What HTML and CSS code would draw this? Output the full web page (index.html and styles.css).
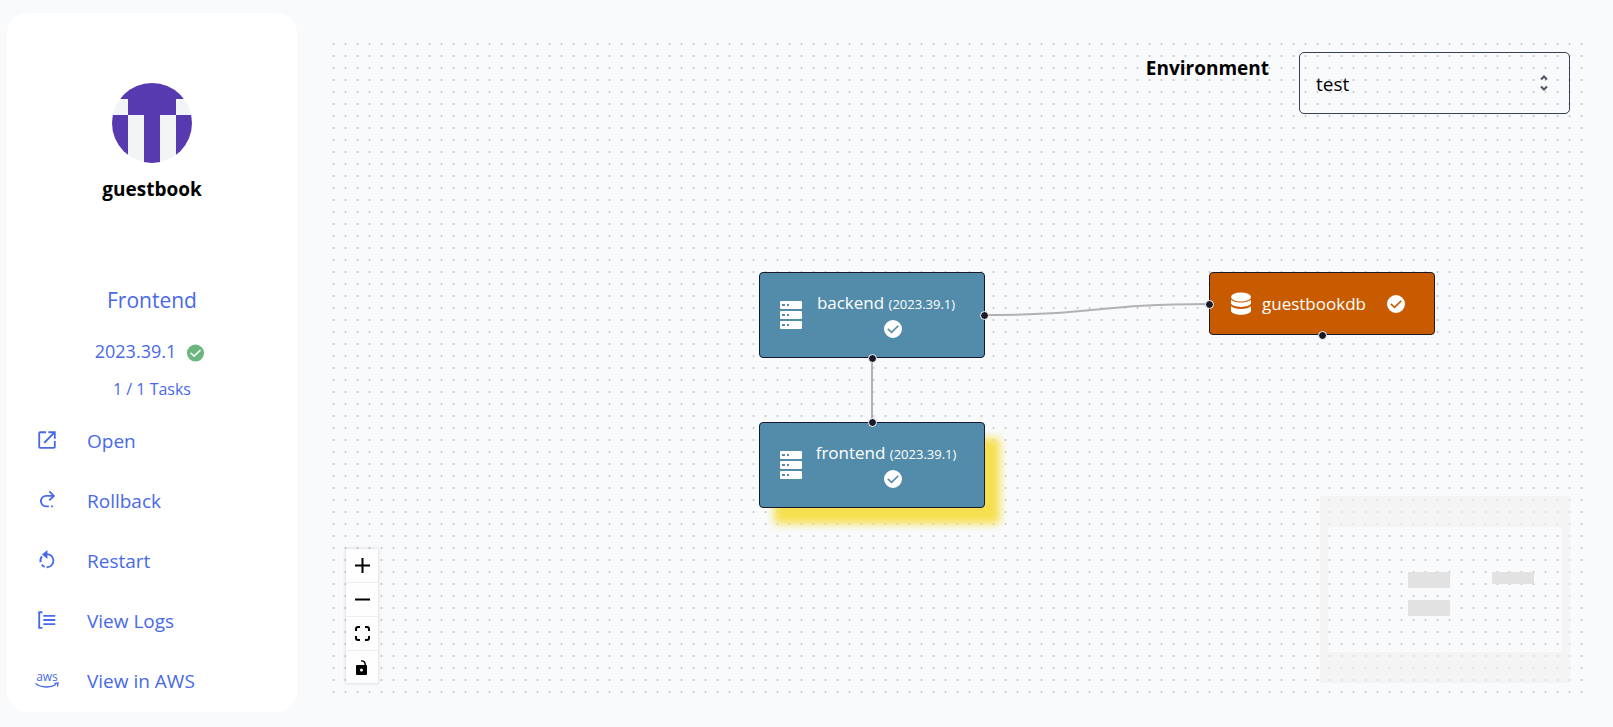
FILE: index.html
```html
<!DOCTYPE html>
<html lang="en">
<head>
<meta charset="utf-8">
<title>guestbook</title>
<link rel="stylesheet" href="styles.css">
</head>
<body>
<svg class="defs" aria-hidden="true">
  <defs>
    <symbol id="check" viewBox="0 0 20 20">
      <path fill-rule="evenodd" d="M10 1a9 9 0 1 0 0 18 9 9 0 0 0 0-18zM15.9 7.3 8.6 14.4 4.3 10.5l1-1.2 3.2 2.9 6.2-6z"/>
    </symbol>
    <symbol id="server" viewBox="0 0 24 28">
      <path fill-rule="evenodd" d="M2 0h20q1 0 1 1v6q0 1-1 1H2Q1 8 1 7V1q0-1 1-1zM3 3v2h3V3zm5 0v2h2V3zM2 10h20q1 0 1 1v6q0 1-1 1H2q-1 0-1-1v-6q0-1 1-1zm1 3v2h3v-2zm5 0v2h2v-2zM2 20h20q1 0 1 1v6q0 1-1 1H2q-1 0-1-1v-6q0-1 1-1zm1 3v2h3v-2zm5 0v2h2v-2z"/>
    </symbol>
    <symbol id="database" viewBox="0 0 22 24">
      <ellipse cx="11" cy="5" rx="10" ry="4.500"/>
      <path d="M1 7.600c3 4 17 4 20 0v4c-2 4.400-18 4.400-20 0zM1 14c3 4 17 4 20 0v5c-2 5-18 5-20 0z"/>
    </symbol>
  </defs>
</svg>
<div class="page">
  <aside class="sidebar">
    <header class="app">
      <svg class="avatar" viewBox="0 0 80 80" aria-hidden="true">
        <clipPath id="round"><circle cx="40" cy="40" r="40"/></clipPath>
        <g clip-path="url(#round)">
          <path fill="#f3f4f6" d="M0 0h80v80H0z"/>
          <path fill="#5739b0" d="M0 0h80v16H0zM16 16h48v16H16zM0 32h16v48H0zM32 32h16v48H32zM64 32h16v48H64z"/>
        </g>
      </svg>
      <h1 class="app-name">guestbook</h1>
    </header>
    <section class="service">
      <h2 class="service-name">Frontend</h2>
      <p class="version">2023.39.1 <svg class="version-icon"><use href="#check"/></svg></p>
      <p class="tasks">1 / 1 Tasks</p>
    </section>
    <nav class="actions">
      <a class="action" href="#open">
        <svg class="action-icon stroke" viewBox="0 0 24 24"><path d="M11 3.500H4.500a1 1 0 0 0-1 1v15a1 1 0 0 0 1 1h15a1 1 0 0 0 1-1V13M13.500 3.500h7v7M20.500 3.500 9 15"/></svg>
        Open</a>
      <a class="action" href="#rollback">
        <svg class="action-icon stroke" viewBox="0 0 24 24"><path d="M14.500 2.500 19.500 7.500l-5 5M19.500 7.500H11a5.700 5.700 0 0 0 0 11.400h3M16.500 19h2"/></svg>
        Rollback</a>
      <a class="action" href="#restart">
        <svg class="action-icon stroke" viewBox="0 0 24 24"><path d="M12 5.500a7.200 7.200 0 0 1 1 14.300l-1.500.1M9.500 19.500A7.500 7.500 0 0 1 6.300 17M5 14.500a7.500 7.500 0 0 1 1.500-6.500"/><path class="solid" d="M12.500 1v10L6.500 6z"/></svg>
        Restart</a>
      <a class="action" href="#logs">
        <svg class="action-icon stroke" viewBox="0 0 24 24"><path d="M7 3.500H3.500v17H7M8 7.500h13M8 12h13M8 16.500h13"/></svg>
        View Logs</a>
      <a class="action" href="#aws">
        <svg class="action-icon" viewBox="0 0 24 24"><text class="aws-word" x="12" y="13" text-anchor="middle">aws</text><path class="aws-smile" d="M.5 15.500c6 4.500 15 4.500 20.500 1M19.500 15.500l3.500-.5-.5 3.500"/></svg>
        View in AWS</a>
    </nav>
  </aside>

  <main class="canvas">
    <svg class="dots" aria-hidden="true">
      <defs><pattern id="grid" x="-3" y="5" width="12" height="12" patternUnits="userSpaceOnUse"><circle cx="5.500" cy="6" r="1"/></pattern></defs>
      <rect width="100%" height="100%" fill="url(#grid)"/>
    </svg>

    <div class="environment">
      <label class="env-label" for="env">Environment</label>
      <div class="env-field">
        <select class="env-select" id="env"><option>test</option></select>
        <svg class="env-arrows" viewBox="0 0 10 18" aria-hidden="true"><path d="M2 5.500 5 2.500l3 3M2 12.500l3 3 3-3"/></svg>
      </div>
    </div>

    <svg class="edges" aria-hidden="true">
      <path d="M654 282C766 282 766 271 878 271M541 326V389"/>
    </svg>

    <article class="node service-node backend">
      <svg class="server-icon"><use href="#server"/></svg>
      <div class="node-text"><span class="node-title">backend <small class="node-version">(2023.39.1)</small></span>
        <svg class="node-check"><use href="#check"/></svg></div>
      <i class="handle right"></i><i class="handle bottom"></i>
    </article>
    <article class="node service-node frontend">
      <svg class="server-icon"><use href="#server"/></svg>
      <div class="node-text"><span class="node-title">frontend <small class="node-version">(2023.39.1)</small></span>
        <svg class="node-check"><use href="#check"/></svg></div>
      <i class="handle top"></i>
    </article>
    <article class="node database-node">
      <svg class="database-icon"><use href="#database"/></svg>
      <span class="database-name">guestbookdb</span>
      <svg class="node-check"><use href="#check"/></svg>
      <i class="handle left"></i><i class="handle bottom"></i>
    </article>

    <div class="controls">
      <button class="control" aria-label="Zoom in"><svg class="control-icon" viewBox="0 0 15 15"><path d="M6.500 0h2v6.500H15v2H8.500V15h-2V8.500H0v-2h6.500z"/></svg></button>
      <button class="control" aria-label="Zoom out"><svg class="control-icon" viewBox="0 0 15 15"><path d="M0 6.500h15v2H0z"/></svg></button>
      <button class="control" aria-label="Fit view"><svg class="control-icon fit" viewBox="0 0 15 15"><path d="M1 5V3q0-2 2-2h2M10 1h2q2 0 2 2v2M14 10v2q0 2-2 2h-2M5 14H3q-2 0-2-2v-2"/></svg></button>
      <button class="control" aria-label="Toggle interactivity"><svg class="control-icon" viewBox="0 0 15 15"><path fill-rule="evenodd" d="M2 5h7.500C9.500 2.500 8.500 1.500 6 1.500V.2C9.500 0 11 2 11 5q1 0 1 1v8q0 1-1 1H2q-1 0-1-1V6q0-1 1-1zm4.500 3.500a1.500 1.500 0 1 0 0 3 1.500 1.500 0 0 0 0-3z"/></svg></button>
    </div>

    <svg class="minimap" viewBox="0 0 250 187" role="img" aria-label="Mini map">
      <path class="minimap-mask" fill-rule="evenodd" d="M0 0h250v187H0zM8 31v125h234V31z"/>
      <g class="minimap-nodes"><rect x="88" y="76" width="42" height="16" rx="1"/><rect x="88" y="104" width="42" height="16" rx="1"/><rect x="172" y="76" width="42" height="12" rx="1"/></g>
    </svg>
  </main>
</div>
</body>
</html>
```
FILE: styles.css
```css
* { box-sizing: border-box; }
body {
  margin: 0;
  background: #f9fafc;
  color: #000;
  font-family: "Segoe UI", "Open Sans", "Noto Sans", sans-serif;
  font-size: 19px;
  line-height: 28px;
}
h1, h2, p { margin: 0; }
svg { display: block; fill: currentColor; }
.defs { position: absolute; width: 0; height: 0; }

.page {
  display: flex;
  gap: 34px;
  min-height: 100vh;
  padding: 13px 28px 15px 7px;
}

.sidebar {
  flex: 0 0 290px;
  padding: 70px 28px 0;
  border-radius: 20px;
  background: #fff;
  color: #4969e8;
}
.app {
  display: flex;
  flex-direction: column;
  align-items: center;
  gap: 12px;
  color: #000;
}
.avatar { width: 80px; height: 80px; }
.app-name { font-size: 19px; font-weight: 700; }
.service {
  display: flex;
  flex-direction: column;
  align-items: center;
  padding-top: 83px;
}
.service-name { font-size: 21px; font-weight: 400; }
.version {
  display: flex;
  align-items: center;
  gap: 10px;
  padding: 23px 4px 0 0;
  font-size: 18px;
}
.version-icon { width: 19px; height: 20px; margin-top: 3px; color: #6bb57f; }
.tasks { padding-top: 10px; font-size: 16px; }
.actions { padding-top: 8px; }
.action {
  display: flex;
  align-items: center;
  gap: 28px;
  height: 60px;
  color: inherit;
  text-decoration: none;
}
.action-icon { width: 24px; height: 24px; margin-bottom: 2px; }
.stroke { padding: 1px; fill: none; stroke: currentColor; stroke-width: 2; }
.solid { fill: currentColor; stroke: none; }
.aws-word { font-size: 12px; }
.aws-smile { fill: none; stroke: currentColor; stroke-width: 1.4; }

.canvas {
  position: relative;
  flex: 1;
  min-width: 0;
  margin: 20px 0 14px;
  overflow: hidden;
}
.dots, .edges { position: absolute; inset: 0; width: 100%; height: 100%; }
.dots { fill: #c4c4c7; }
.edges { fill: none; stroke: #b1b1b7; stroke-width: 2; }

.environment {
  position: relative;
  display: flex;
  justify-content: flex-end;
  gap: 30px;
  padding: 19px 15px 0 0;
}
.env-label { padding-top: 2px; font-weight: 700; }
.env-field { position: relative; width: 271px; }
.env-select {
  width: 100%;
  height: 62px;
  padding: 2px 40px 0 16px;
  border: 1px solid #374151;
  border-radius: 5px;
  background: transparent;
  color: #000;
  font: inherit;
  appearance: none;
}
.env-arrows {
  position: absolute;
  top: 22px;
  right: 21px;
  width: 10px;
  height: 18px;
  fill: none;
  stroke: #4b5563;
  stroke-width: 2;
  pointer-events: none;
}

.node {
  position: absolute;
  display: flex;
  align-items: center;
  width: 226px;
  border: 1px solid #1a192b;
  border-radius: 4px;
  color: #fff;
  font-size: 17px;
  line-height: 26px;
}
.service-node {
  left: 428px;
  height: 86px;
  padding-left: 19px;
  gap: 13px;
  background: #528caa;
}
.backend { top: 239px; }
.frontend { top: 389px; box-shadow: 15px 16px 8px #f6e050; }
.database-node {
  top: 239px;
  left: 878px;
  height: 63px;
  padding-left: 20px;
  background: #c85b00;
}
.server-icon { width: 24px; height: 28px; }
.node-text { display: flex; flex-direction: column; align-items: center; width: 154px; gap: 2px; padding-bottom: 2px; }
.node-title { padding-right: 14px; white-space: nowrap; }
.node-version { font-size: 13px; }
.node-check { width: 20px; height: 20px; }
.database-icon { width: 22px; height: 24px; margin-right: 10px; }
.database-name { flex: 0 0 124px; }
.handle {
  position: absolute;
  width: 9px;
  height: 9px;
  border: 1px solid #fff;
  border-radius: 50%;
  background: #1a192b;
}
.top { top: -5px; left: calc(50% - 4px); }
.bottom { bottom: -6px; left: calc(50% - 4px); }
.left { left: -5px; top: calc(50% - 4px); }
.right { right: -5px; top: calc(50% - 4px); }

.controls {
  position: absolute;
  left: 15px;
  bottom: 15px;
  width: 32px;
  box-shadow: 0 0 3px 1px rgba(0, 0, 0, .1);
}
.control {
  display: flex;
  align-items: center;
  justify-content: center;
  width: 100%;
  height: 34px;
  padding: 0;
  border: 0;
  border-bottom: 1px solid #eee;
  background: #fefefe;
  color: #000;
}
.control:last-child { border-bottom: 0; height: 32px; }
.control-icon { width: 15px; height: 15px; }
.fit { fill: none; stroke: currentColor; stroke-width: 2; }

.minimap { position: absolute; right: 15px; bottom: 15px; width: 250px; height: 187px; }
.minimap-mask { fill: rgba(240, 240, 240, .6); }
.minimap-nodes { fill: #e2e2e2; }
```
